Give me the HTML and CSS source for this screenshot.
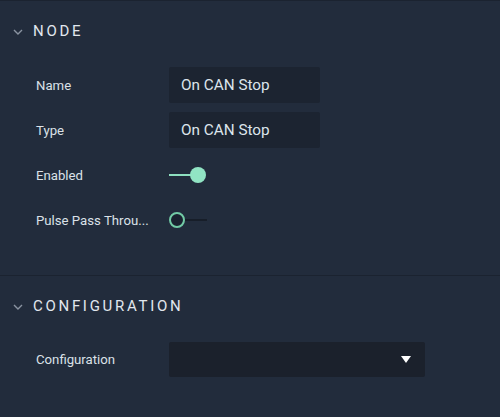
FILE: index.html
```html
<!DOCTYPE html>
<html>
<head>
<meta charset="utf-8">
<link rel="stylesheet" href="styles.css">
</head>
<body>
<div class="panel">
  <section class="section">
    <div class="section-header">
      <svg class="chevron" width="10" height="6" viewBox="0 0 10 6"><polyline points="1,1 5,5 9,1" fill="none" stroke="#8a93a1" stroke-width="1.4"/></svg>
      <span class="section-title">NODE</span>
    </div>
    <div class="rows">
      <div class="row">
        <span class="label">Name</span>
        <div class="text-field">On CAN Stop</div>
      </div>
      <div class="row">
        <span class="label">Type</span>
        <div class="text-field">On CAN Stop</div>
      </div>
      <div class="row">
        <span class="label">Enabled</span>
        <div class="toggle on"><span class="track"></span><span class="thumb"></span></div>
      </div>
      <div class="row">
        <span class="label">Pulse Pass Throu...</span>
        <div class="toggle off"><span class="track"></span><span class="thumb"></span></div>
      </div>
    </div>
  </section>
  <section class="section second">
    <div class="section-header">
      <svg class="chevron" width="10" height="6" viewBox="0 0 10 6"><polyline points="1,1 5,5 9,1" fill="none" stroke="#8a93a1" stroke-width="1.4"/></svg>
      <span class="section-title">CONFIGURATION</span>
    </div>
    <div class="rows">
      <div class="row short">
        <span class="label">Configuration</span>
        <div class="select">
          <svg width="10" height="7" viewBox="0 0 10 7"><polygon points="0,0 10,0 5,7" fill="#ffffff"/></svg>
        </div>
      </div>
    </div>
  </section>
</div>
</body>
</html>
```
FILE: styles.css
```css
html, body {
  margin: 0;
  padding: 0;
  background: #222c3c;
}
body {
  width: 500px;
  height: 417px;
  overflow: hidden;
  font-family: Roboto, "Liberation Sans", sans-serif;
  color: #dce3ea;
}
.panel {
  border-top: 1px solid #1b2330;
  height: 416px;
}
.section {
  padding-top: 12px;
  padding-bottom: 37px;
}
.section.second {
  border-top: 1px solid #1b2330;
  padding-bottom: 0;
}
.section-header {
  height: 36px;
  display: flex;
  align-items: center;
  padding-left: 13px;
}
.chevron {
  margin-right: 10px;
  margin-top: 1px;
}
.section-title {
  font-size: 15px;
  letter-spacing: 2.7px;
  color: #e1e7ee;
  font-weight: 400;
}
.rows {
  margin-top: 18px;
  display: flex;
  flex-direction: column;
  gap: 9px;
}
.row {
  height: 36px;
  display: flex;
  align-items: center;
  padding-left: 36px;
}
.row.short {
  height: 35px;
}
.label {
  width: 133px;
  font-size: 13.2px;
  color: #dbe1e8;
  white-space: nowrap;
}
.text-field {
  width: 151px;
  height: 36px;
  box-sizing: border-box;
  background: #1c2431;
  border-radius: 2px;
  padding-left: 12px;
  display: flex;
  align-items: center;
  font-size: 15.3px;
  color: #dde4ec;
}
.toggle {
  position: relative;
  width: 38px;
  height: 16px;
}
.toggle .track {
  position: absolute;
  left: 0;
  top: 7px;
  width: 38px;
  height: 2px;
}
.toggle .thumb {
  position: absolute;
  top: 0;
  width: 16px;
  height: 16px;
  box-sizing: border-box;
  border-radius: 50%;
}
.toggle.on .track {
  background: #8ee0c0;
  width: 24px;
}
.toggle.on .thumb {
  left: 21px;
  background: #91e4c4;
}
.toggle.off .track {
  background: #171e29;
  left: 14px;
  width: 24px;
}
.toggle.off .thumb {
  left: 0;
  border: 2px solid #72cba6;
  background: #1a2230;
}
.select {
  width: 256px;
  height: 35px;
  box-sizing: border-box;
  background: #1b212c;
  border-radius: 2px;
  display: flex;
  align-items: center;
  justify-content: flex-end;
  padding-right: 14px;
}
.select svg {
  display: block;
}
```
